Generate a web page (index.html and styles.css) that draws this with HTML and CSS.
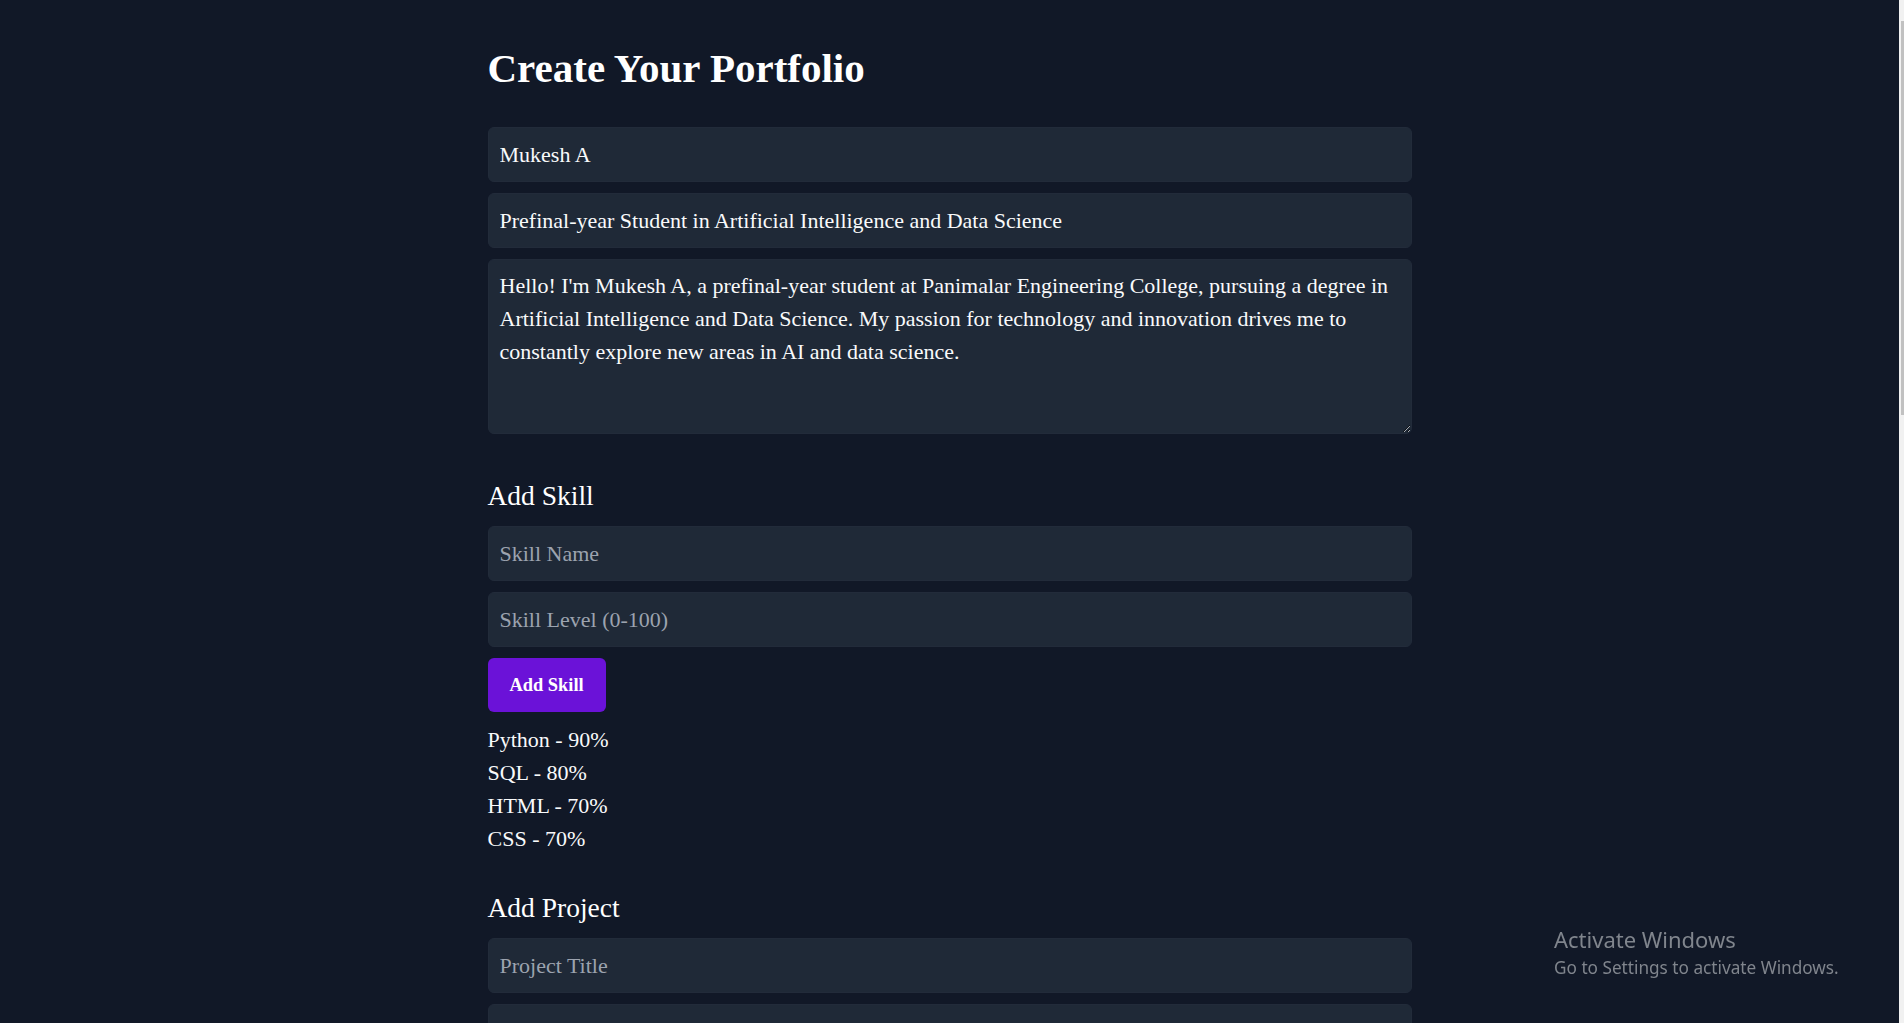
FILE: index.html
```html
<!DOCTYPE html>
<html lang="en">
<head>
<meta charset="utf-8">
<title>Create Your Portfolio</title>
<link rel="stylesheet" href="styles.css">
</head>
<body>
<main class="container">
  <h1 class="title">Create Your Portfolio</h1>
  <input class="field" type="text" value="Mukesh A">
  <input class="field" type="text" value="Prefinal-year Student in Artificial Intelligence and Data Science">
  <textarea class="field area">Hello! I'm Mukesh A, a prefinal-year student at Panimalar Engineering College, pursuing a degree in Artificial Intelligence and Data Science. My passion for technology and innovation drives me to constantly explore new areas in AI and data science.</textarea>

  <h2 class="section-title first">Add Skill</h2>
  <input class="field" type="text" placeholder="Skill Name">
  <input class="field" type="text" placeholder="Skill Level (0-100)">
  <button class="btn" type="button">Add Skill</button>
  <ul class="skills">
    <li>Python - 90%</li>
    <li>SQL - 80%</li>
    <li>HTML - 70%</li>
    <li>CSS - 70%</li>
  </ul>

  <h2 class="section-title">Add Project</h2>
  <input class="field" type="text" placeholder="Project Title">
  <input class="field" type="text" placeholder="Project Description">
</main>

<div class="watermark">
  <div class="wm-title">Activate Windows</div>
  <div class="wm-sub">Go to Settings to activate Windows.</div>
</div>

<div class="scrollbar"><div class="thumb"></div></div>
</body>
</html>
```

FILE: styles.css
```css
html, body {
  margin: 0;
  height: 100%;
  overflow: hidden;
}

body {
  background: #111827;
  color: #f9fafb;
  font-family: "Liberation Serif", "Times New Roman", serif;
  font-size: 22px;
  padding-right: 5px;
  box-sizing: border-box;
}

.container {
  width: 924px;
  margin: 0 auto;
  padding-top: 45px;
}

.title {
  font-size: 41px;
  line-height: 47px;
  font-weight: bold;
  margin: 0 0 35px;
  color: #ffffff;
}

.field {
  display: block;
  box-sizing: border-box;
  width: 100%;
  height: 55px;
  margin: 0 0 11px;
  padding: 11px 11px;
  background: #1f2937;
  border: 1px solid #222b3a;
  border-radius: 6px;
  color: #f9fafb;
  font-family: "Liberation Serif", "Times New Roman", serif;
  font-size: 22px;
  line-height: 33px;
  outline: none;
}

.field::placeholder {
  color: #9ca3af;
}

.area {
  height: 175px;
  padding-top: 9px;
  resize: vertical;
  overflow: hidden;
  margin-bottom: 0;
}

.section-title {
  font-size: 27.5px;
  line-height: 32px;
  font-weight: normal;
  margin: 46px 0 14px;
  color: #ffffff;
}

.skills + .section-title {
  margin-top: 37px;
}

.btn {
  display: flex;
  align-items: center;
  justify-content: center;
  height: 54px;
  padding: 0 22px;
  margin: 0;
  background: #6b12d8;
  color: #ffffff;
  border: none;
  border-radius: 6px;
  font-family: "Liberation Serif", "Times New Roman", serif;
  font-size: 18.4px;
  font-weight: bold;
}

.skills {
  list-style: none;
  margin: 11px 0 0;
  padding: 0;
  line-height: 33px;
}

.watermark {
  position: fixed;
  left: 1554px;
  top: 924px;
  font-family: "Noto Sans", "Open Sans", sans-serif;
  color: #80858d;
}

.wm-title {
  font-size: 22px;
  line-height: 30px;
}

.wm-sub {
  font-size: 17.2px;
  line-height: 27px;
}

.scrollbar {
  position: fixed;
  top: 0;
  right: 0;
  width: 5px;
  height: 100%;
  background: #f1f1f1;
}

.thumb {
  position: absolute;
  top: 21px;
  right: 0;
  width: 3px;
  height: 394px;
  background: #c1c1c1;
}
```
